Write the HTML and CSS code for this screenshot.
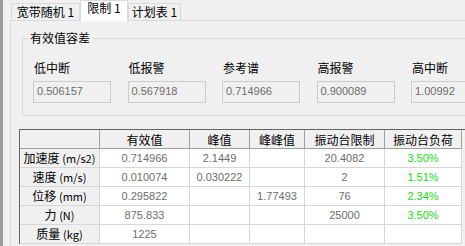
FILE: index.html
```html
<!DOCTYPE html>
<html lang="zh">
<head>
<meta charset="utf-8">
<link rel="stylesheet" href="styles.css">
</head>
<body>
<div class="app">
  <div class="edge"></div>
  <div class="tabctl">
    <div class="tabstrip">
      <div class="tab t1">宽带随机 1</div>
      <div class="tab active t2">限制 1</div>
      <div class="tab t3">计划表 1</div>
    </div>
    <div class="panel">
      <fieldset class="group">
        <legend>有效值容差</legend>
        <div class="fields">
          <div class="field"><div class="lbl">低中断</div><div class="box">0.506157</div></div>
          <div class="field"><div class="lbl">低报警</div><div class="box">0.567918</div></div>
          <div class="field"><div class="lbl">参考谱</div><div class="box">0.714966</div></div>
          <div class="field"><div class="lbl">高报警</div><div class="box">0.900089</div></div>
          <div class="field"><div class="lbl">高中断</div><div class="box">1.00992</div></div>
        </div>
      </fieldset>
      <div class="grid">
        <div class="c h"></div>
        <div class="c h">有效值</div>
        <div class="c h">峰值</div>
        <div class="c h">峰峰值</div>
        <div class="c h">振动台限制</div>
        <div class="c h">振动台负荷</div>

        <div class="c rh">加速度 <span class="unit">(m/s2)</span></div>
        <div class="c">0.714966</div>
        <div class="c">2.1449</div>
        <div class="c"></div>
        <div class="c">20.4082</div>
        <div class="c pct">3.50%</div>

        <div class="c rh">速度 <span class="unit">(m/s)</span></div>
        <div class="c">0.010074</div>
        <div class="c">0.030222</div>
        <div class="c"></div>
        <div class="c">2</div>
        <div class="c pct">1.51%</div>

        <div class="c rh">位移 <span class="unit">(mm)</span></div>
        <div class="c">0.295822</div>
        <div class="c"></div>
        <div class="c">1.77493</div>
        <div class="c">76</div>
        <div class="c pct">2.34%</div>

        <div class="c rh">力 <span class="unit">(N)</span></div>
        <div class="c">875.833</div>
        <div class="c"></div>
        <div class="c"></div>
        <div class="c">25000</div>
        <div class="c pct">3.50%</div>

        <div class="c rh">质量 <span class="unit">(kg)</span></div>
        <div class="c">1225</div>
        <div class="c"></div>
        <div class="c"></div>
        <div class="c"></div>
        <div class="c"></div>
      </div>
    </div>
  </div>
</div>
</body>
</html>
```
FILE: styles.css
```css
html, body {
  margin: 0;
  padding: 0;
}
body {
  background: #f0f0f0;
  width: 465px;
  height: 246px;
  overflow: hidden;
  font-family: "Noto Sans CJK SC", "Noto Sans", sans-serif;
  font-size: 12px;
  color: #000;
}
.app {
  display: flex;
  height: 246px;
  overflow: hidden;
}
.edge {
  flex: none;
  width: 3px;
  background: #9a9a9a;
}
.tabctl {
  flex: 1;
  min-width: 0;
  margin-left: 7px;
  overflow: hidden;
}
.tabstrip {
  display: flex;
  align-items: flex-end;
  height: 20px;
  padding-left: 1px;
}
.tab {
  box-sizing: border-box;
  height: 17px;
  border: 1px solid #d9d9d9;
  border-bottom: none;
  background: #f0f0f0;
  text-align: center;
  line-height: 15px;
  white-space: nowrap;
}
.t1 { width: 69px; }
.t2 { width: 48px; }
.t3 { width: 53px; }
.tab.active {
  height: 21px;
  margin-bottom: -1px;
  background: #fff;
  position: relative;
  z-index: 1;
  line-height: 14px;
}
.panel {
  box-sizing: border-box;
  height: 226px;
  border-top: 1px solid #d9d9d9;
  border-left: 1px solid #d9d9d9;
  overflow: hidden;
}
.group {
  margin: 10px 0 0 11px;
  padding: 15px 0 12px 0;
  border: 1px solid #dcdcdc;
  border-right: none;
  min-width: 0;
}
.group legend {
  margin-left: 5px;
  padding: 0 2px;
  line-height: 14px;
}
.fields {
  display: flex;
  gap: 16.5px;
  padding-left: 10px;
  overflow: hidden;
}
.field {
  flex: none;
  width: 78px;
}
.lbl {
  line-height: 16px;
  padding-left: 1px;
  white-space: nowrap;
}
.box {
  box-sizing: border-box;
  margin-top: 5px;
  height: 22px;
  border: 1px solid #cccccc;
  background: #f0f0f0;
  padding-left: 3px;
  font-family: "Liberation Sans", Arial, sans-serif;
  font-size: 11px;
  line-height: 19px;
  color: #6d6d6d;
}
.grid {
  margin: 13px 0 0 8px;
  border-top: 1px solid #646464;
  border-left: 1px solid #646464;
  background: #f0f0f0;
  display: grid;
  grid-template-columns: 80px 90px 60px 55px 80px 77px;
  grid-auto-rows: 19px;
}
.c {
  box-sizing: border-box;
  border-right: 1px solid #d6d6d6;
  border-bottom: 1px solid #d6d6d6;
  background: #fff;
  text-align: center;
  font-family: "Liberation Sans", Arial, sans-serif;
  font-size: 11px;
  line-height: 18px;
  color: #6d6d6d;
  white-space: nowrap;
  overflow: hidden;
}
.c.h {
  background: #f0f0f0;
  border-right-color: #a0a0a0;
  border-bottom-color: #a0a0a0;
  font-family: "Noto Sans CJK SC", "Noto Sans", sans-serif;
  font-size: 12px;
  color: #000;
  line-height: 19px;
}
.c.rh {
  background: #f0f0f0;
  font-family: "Noto Sans CJK SC", "Noto Sans", sans-serif;
  font-size: 12px;
  color: #000;
}
.unit {
  font-size: 11px;
}
.c.pct {
  color: #10dd10;
}
```
